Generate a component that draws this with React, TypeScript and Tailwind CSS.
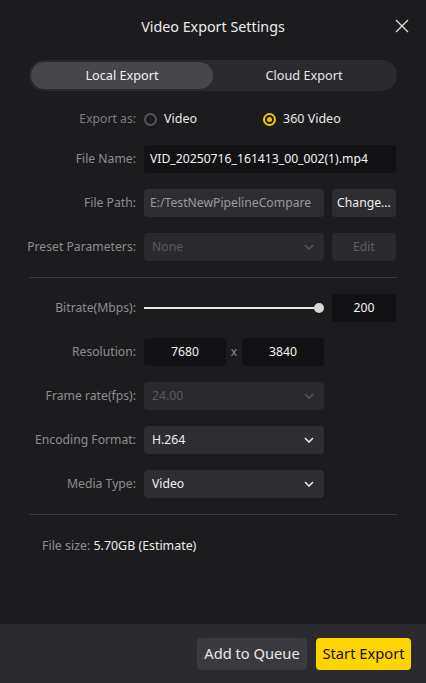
import React, { useState } from 'react';

const font = { fontFamily: '"Noto Sans", "Open Sans", sans-serif' };

function Chevron({ dim }: { dim?: boolean }) {
  return (
    <svg width="10" height="6" viewBox="0 0 10 6" className={dim ? 'text-[#55555a]' : 'text-[#e6e6e6]'}>
      <path d="M1 1l4 4 4-4" fill="none" stroke="currentColor" strokeWidth="1.6" />
    </svg>
  );
}

function Row({ label, children }: { label: string; children: React.ReactNode }) {
  return (
    <div className="flex items-center h-7">
      <div className="w-[144px] shrink-0 pr-[8px] text-right text-[12.2px] text-[#8c8c90] whitespace-nowrap">{label}</div>
      <div className="flex items-center flex-1 min-w-0">{children}</div>
    </div>
  );
}

function Select({ value, dim }: { value: string; dim?: boolean }) {
  return (
    <div className={`w-[180px] h-7 rounded flex items-center justify-between pl-2 pr-[10px] text-[12.2px] ${dim ? 'text-[#5a5a5f] bg-[#2a2a2e]' : 'text-[#f0f0f0] bg-[#2e2e32]'}`}>
      <span>{value}</span>
      <Chevron dim={dim} />
    </div>
  );
}

function Radio({ on }: { on: boolean }) {
  return (
    <span className={`w-[13px] h-[13px] rounded-full border-2 ${on ? 'border-[#f5c400]' : 'border-[#555559]'} flex items-center justify-center`}>
      {on && <span className="w-[5px] h-[5px] rounded-full bg-[#f5c400]" />}
    </span>
  );
}

export default function App() {
  const [tab, setTab] = useState<'local' | 'cloud'>('local');
  const [kind, setKind] = useState<'video' | '360'>('360');

  return (
    <div className="w-[426px] h-[683px] bg-[#1c1c1f] flex flex-col text-[#e8e8e8]" style={font}>
      <div className="relative h-[54px] flex items-center justify-center">
        <span className="text-[14.3px] text-[#ececec]">Video Export Settings</span>
        <button className="absolute right-[17px] top-[19px] text-[#e0e0e0]">
          <svg width="14" height="14" viewBox="0 0 14 14">
            <path d="M1 1l12 12M13 1L1 13" stroke="currentColor" strokeWidth="1.3" />
          </svg>
        </button>
      </div>

      <div className="mx-[29px] mt-[6px] h-[31px] rounded-full bg-[#2a2a2e] p-[2px] flex text-[12.7px]">
        <button
          className={`flex-1 rounded-full ${tab === 'local' ? 'bg-[#46464b] text-[#f2f2f2]' : 'text-[#e6e6e6]'}`}
          onClick={() => setTab('local')}
        >
          Local Export
        </button>
        <button
          className={`flex-1 rounded-full ${tab === 'cloud' ? 'bg-[#46464b] text-[#f2f2f2]' : 'text-[#e6e6e6]'}`}
          onClick={() => setTab('cloud')}
        >
          Cloud Export
        </button>
      </div>

      <div className="flex flex-col gap-4 pr-[30px] mt-[14px]">
        <div className="flex items-center h-[28px] -mb-[4px]">
          <div className="w-[144px] shrink-0 pr-[8px] text-right text-[12.2px] text-[#7c7c80]">Export as:</div>
          <button className="flex items-center gap-[7px] w-[119px] text-[12.5px]" onClick={() => setKind('video')}>
            <Radio on={kind === 'video'} />
            Video
          </button>
          <button className="flex items-center gap-[7px] text-[12.5px]" onClick={() => setKind('360')}>
            <Radio on={kind === '360'} />
            360 Video
          </button>
        </div>

        <Row label="File Name:">
          <div className="w-full h-7 rounded bg-[#121214] flex items-center px-[6px] text-[12.2px] text-[#f4f4f4]">
            VID_20250716_161413_00_002(1).mp4
          </div>
        </Row>

        <Row label="File Path:">
          <div className="w-[180px] h-7 rounded bg-[#2e2e32] flex items-center px-[6px] text-[12.2px] text-[#9a9a9e] overflow-hidden whitespace-nowrap">
            E:/TestNewPipelineCompare
          </div>
          <button className="ml-2 w-[64px] h-7 rounded bg-[#2e2e32] text-[12.2px] text-[#f0f0f0]">Change...</button>
        </Row>

        <Row label="Preset Parameters:">
          <Select value="None" dim />
          <button className="ml-2 w-[64px] h-7 rounded bg-[#2a2a2e] text-[12.2px] text-[#5e5e62]">Edit</button>
        </Row>
      </div>

      <div className="mx-[29px] mt-4 h-px bg-[#3a3a3e]" />

      <div className="flex flex-col gap-4 pr-[30px] mt-4">
        <Row label="Bitrate(Mbps):">
          <div className="relative w-[180px] h-7 flex items-center">
            <div className="w-[173px] h-[2px] bg-[#e8e8e8]" />
            <div className="absolute left-[170px] w-[10px] h-[10px] rounded-full bg-[#d8d8d8]" />
          </div>
          <div className="ml-2 w-[64px] h-7 rounded bg-[#121214] flex items-center justify-center text-[12.2px] text-[#f4f4f4]">200</div>
        </Row>

        <Row label="Resolution:">
          <div className="w-[82px] h-7 rounded bg-[#121214] flex items-center justify-center text-[12.2px] text-[#f4f4f4]">7680</div>
          <span className="w-4 text-center text-[12px] text-[#8c8c90]">x</span>
          <div className="w-[82px] h-7 rounded bg-[#121214] flex items-center justify-center text-[12.2px] text-[#f4f4f4]">3840</div>
        </Row>

        <Row label="Frame rate(fps):">
          <Select value="24.00" dim />
        </Row>

        <Row label="Encoding Format:">
          <Select value="H.264" />
        </Row>

        <Row label="Media Type:">
          <Select value="Video" />
        </Row>
      </div>

      <div className="mx-[29px] mt-4 h-px bg-[#3a3a3e]" />

      <div className="mt-[22px] pl-[42px] text-[12.4px]">
        <span className="text-[#8c8c90]">File size: </span>
        <span className="text-[#ececec]">5.70GB (Estimate)</span>
      </div>

      <div className="mt-auto h-[59px] bg-[#2b2b2f] flex items-center justify-end gap-[9px] pr-[15px]">
        <button className="h-8 w-[110px] rounded bg-[#3a3a3e] text-[14.7px] text-[#e8e8e8]">Add to Queue</button>
        <button className="h-8 w-[95px] rounded bg-[#ffd400] text-[14.7px] text-[#111]">Start Export</button>
      </div>
    </div>
  );
}
